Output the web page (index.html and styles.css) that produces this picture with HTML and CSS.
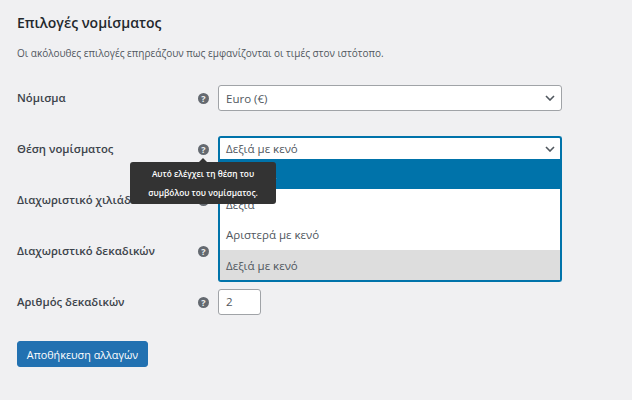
FILE: index.html
```html
<!DOCTYPE html>
<html lang="el">
<head>
    <meta charset="UTF-8">
    <title>Επιλογές νομίσματος</title>
    <link rel="stylesheet" href="styles.css">
</head>
<body>
    <h2>Επιλογές νομίσματος</h2>
    <p class="intro">Οι ακόλουθες επιλογές επηρεάζουν πως εμφανίζονται οι τιμές στον ιστότοπο.</p>

    <div class="form-rows">
        <div class="row">
            <label>Νόμισμα</label>
            <span class="help">?</span>
            <div class="select">
                <span>Euro (€)</span>
                <svg class="chevron" viewBox="0 0 10 6"><path d="M1 1l4 4 4-4"/></svg>
            </div>
        </div>

        <div class="row">
            <label>Θέση νομίσματος</label>
            <span class="help">?
                <span class="tooltip">Αυτό ελέγχει τη θέση του<br>συμβόλου του νομίσματος.</span>
            </span>
            <div class="select-wrap">
                <div class="select open">
                    <span>Δεξιά με κενό</span>
                    <svg class="chevron" viewBox="0 0 10 6"><path d="M1 1l4 4 4-4"/></svg>
                    <ul class="options">
                        <li class="hover">Αριστερά</li>
                        <li>Δεξιά</li>
                        <li>Αριστερά με κενό</li>
                        <li class="current">Δεξιά με κενό</li>
                    </ul>
                </div>
            </div>
        </div>

        <div class="row">
            <label>Διαχωριστικό χιλιάδων</label>
            <span class="help">?</span>
            <div class="select"></div>
        </div>

        <div class="row">
            <label>Διαχωριστικό δεκαδικών</label>
            <span class="help">?</span>
            <div class="select"></div>
        </div>

        <div class="row">
            <label>Αριθμός δεκαδικών</label>
            <span class="help">?</span>
            <div class="number">2</div>
        </div>
    </div>

    <button class="save">Αποθήκευση αλλαγών</button>
</body>
</html>
```

FILE: styles.css
```css
body {
    font-family: "Open Sans", "Noto Sans", sans-serif;
    font-size: 12px;
    color: #50575e;
    background-color: #f0f0f2;
    margin: 0;
    padding: 14px 17px;
    overflow: hidden;
}
h2 {
    font-size: 14px;
    font-weight: 600;
    color: #23282d;
    line-height: 18px;
    margin: 0;
}
.intro {
    font-size: 10px;
    line-height: 16px;
    margin: 13px 0 0;
}
.form-rows {
    display: flex;
    flex-direction: column;
    gap: 25px;
    margin-top: 24px;
}
.row {
    display: grid;
    grid-template-columns: 180px 21px 344px;
    align-items: center;
    height: 26px;
}
.row label {
    font-size: 11.3px;
    line-height: 26px;
    align-self: start;
    font-weight: 600;
    color: #3c434a;
}
.help {
    position: relative;
    justify-self: end;
    margin-right: 9px;
    width: 11px;
    height: 11px;
    border-radius: 50%;
    background: #646970;
    color: #f0f0f1;
    font-size: 9px;
    font-weight: 700;
    line-height: 11px;
    text-align: center;
}
.tooltip {
    position: absolute;
    z-index: 3;
    top: 18px;
    left: -68px;
    width: 146px;
    padding: 2px 0;
    background: #333;
    border-radius: 3px;
    color: #fff;
    font-size: 8.3px;
    font-weight: 600;
    line-height: 19px;
}
.tooltip::before {
    content: "";
    position: absolute;
    top: -4px;
    left: 69px;
    border-left: 4px solid transparent;
    border-right: 4px solid transparent;
    border-bottom: 4px solid #333;
}
.select {
    position: relative;
    display: flex;
    align-items: center;
    box-sizing: border-box;
    height: 26px;
    padding: 0 7px;
    background: #fff;
    border: 1px solid #a0a3a7;
    border-radius: 3px;
    font-size: 11.5px;
}
.select-wrap {
    position: relative;
    z-index: 2;
    height: 26px;
}
.select.open {
    border: 2px solid #0073aa;
    border-bottom: 0;
    padding-left: 6px;
    border-radius: 3px 3px 0 0;
    height: 23px;
}
.chevron {
    position: absolute;
    right: 6px;
    top: 9px;
    width: 10px;
    height: 6px;
    fill: none;
    stroke: #50575e;
    stroke-width: 1.6;
}
.open .chevron {
    right: 5px;
    top: 8px;
}
.options {
    position: absolute;
    top: 21px;
    left: -2px;
    right: -2px;
    margin: 0;
    padding: 0;
    list-style: none;
    background: #fff;
    border: 2px solid #0073aa;
    border-top: 0;
    border-radius: 0 0 3px 3px;
}
.options li {
    height: 30.2px;
    line-height: 31px;
    padding: 0 6px;
}
.options .hover {
    background: #0073aa;
    color: #fff;
}
.options .current {
    background: #ddd;
}
.number {
    box-sizing: border-box;
    width: 43px;
    height: 26px;
    padding: 0 7px;
    line-height: 24px;
    background: #fff;
    border: 1px solid #a0a3a7;
    border-radius: 3px;
    font-size: 11.5px;
}
.save {
    display: block;
    margin-top: 26px;
    width: 131px;
    height: 26px;
    padding: 0;
    background: #2271b1;
    border: 1px solid #2271b1;
    border-radius: 3px;
    color: #fff;
    font-family: inherit;
    font-size: 10.8px;
}
```
